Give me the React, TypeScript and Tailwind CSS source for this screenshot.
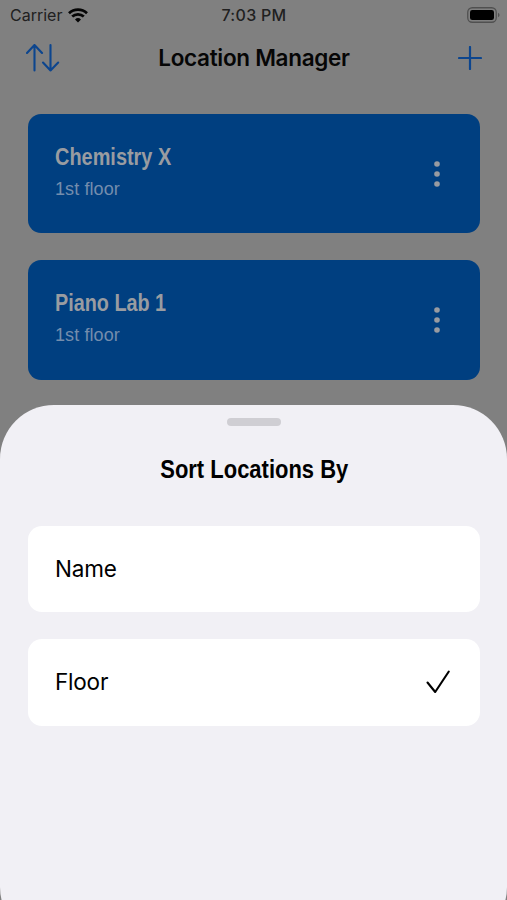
import { useState } from 'react';

const locations = [
  { name: 'Chemistry X', floor: '1st floor', nameClass: 'scale-x-[0.83]' },
  { name: 'Piano Lab 1', floor: '1st floor', nameClass: 'scale-x-[0.825]' },
];

const sortOptions = ['Name', 'Floor'];

function StatusBar() {
  return (
    <div className="grid h-[30px] grid-cols-3 items-center pl-[10px] pr-[7px] text-[#202020]">
      <div className="flex items-center gap-[6px]">
        <span className="text-[16px]">Carrier</span>
        <svg width="20" height="15" viewBox="0 0 20 15" fill="none" stroke="#050505" strokeWidth="2.7">
          <path d="M1 5.2C6 .3 14 .3 19 5.2" />
          <path d="M4.2 8.6C7.5 5.5 12.5 5.5 15.8 8.6" />
          <path d="M7 11.4Q10 8.8 13 11.4L10 14.4Z" fill="#050505" stroke="none" />
        </svg>
      </div>
      <span className="-ml-[2px] text-center text-[16px] font-medium tracking-[0.3px]">7:03 PM</span>
      <svg className="justify-self-end" width="33" height="16" viewBox="0 0 33 16">
        <rect x="0.75" y="0.75" width="28.5" height="14.5" rx="4.5" fill="none" stroke="#505050" strokeWidth="1.3" />
        <rect x="3" y="3" width="24" height="10" rx="2.3" fill="#000" />
        <path d="M31 5.7Q32.6 6.4 32.6 8T31 10.3Z" fill="#505050" />
      </svg>
    </div>
  );
}

function NavBar() {
  return (
    <header className="grid h-[56px] grid-cols-[1fr_auto_1fr] items-center pl-[26px] pr-[25px]">
      <svg width="35" height="30" viewBox="0 0 35 30" fill="none" stroke="#0c458e" strokeWidth="2.1" strokeLinecap="round" strokeLinejoin="round">
        <path d="M8.5 27.5V2M1 10L8.5 2L16 10" />
        <path d="M24.5 2V27.5M17 19.5L24.5 27.5L32.2 19.5" />
      </svg>
      <h1 className="text-[22.5px] font-semibold tracking-[-0.3px] text-[#060606]">Location Manager</h1>
      <svg className="justify-self-end" width="24" height="24" viewBox="0 0 24 24" fill="none" stroke="#0c458e" strokeWidth="2.2" strokeLinecap="round">
        <path d="M12 1V23M1 12H23" />
      </svg>
    </header>
  );
}

export default function App() {
  const [sortBy, setSortBy] = useState('Floor');

  return (
    <div className="relative h-[900px] w-full overflow-hidden bg-[#808080] font-['Inter',sans-serif]">
      <StatusBar />
      <NavBar />

      {/* Locations */}
      <main className="mt-7 flex flex-col gap-[27px] pr-[27px] pl-7">
        {locations.map((location) => (
          <div key={location.name} className="flex h-[119.3px] items-center justify-between rounded-[13px] bg-[#003f80] pl-[27px] pr-[40px] font-['Liberation_Sans',sans-serif]">
            <div className="pb-[2px]">
              <h2 className={`origin-left text-[24px] leading-8 font-bold whitespace-nowrap text-[#999ca1] ${location.nameClass}`}>{location.name}</h2>
              <p className="text-[18px] leading-8 tracking-[0.1px] text-[#748dad]">{location.floor}</p>
            </div>
            <svg width="6" height="26" viewBox="0 0 6 26" fill="#989ba1">
              <circle cx="3" cy="3" r="2.8" />
              <circle cx="3" cy="13" r="2.8" />
              <circle cx="3" cy="23" r="2.8" />
            </svg>
          </div>
        ))}
      </main>

      {/* Bottom sheet */}
      <section className="absolute inset-x-0 top-[405px] flex h-[536px] flex-col items-center rounded-[54px] bg-[#f1f0f5] pt-[13px] pr-[27px] pl-7">
        <div className="h-2 w-[54px] rounded-full bg-[#cfced3]" />
        <h2 className="mt-[27px] scale-x-[0.845] font-['Liberation_Sans',sans-serif] text-[26px] leading-8 font-bold whitespace-nowrap text-black">Sort Locations By</h2>
        <div className="mt-[40.5px] flex w-full flex-col gap-[27px]">
          {sortOptions.map((option) => (
            <button key={option} onClick={() => setSortBy(option)} className="flex h-[86.5px] items-center justify-between rounded-[14px] bg-white pl-[27px] pr-[29px] text-[22.5px] tracking-[-0.2px] text-black">
              {option}
              {sortBy === option && (
                <svg width="26" height="26" viewBox="0 0 26 26" fill="none" stroke="#000" strokeWidth="2.1" strokeLinecap="round" strokeLinejoin="round">
                  <path d="M2.5 13.5L10.2 23L23.8 2.5" />
                </svg>
              )}
            </button>
          ))}
        </div>
      </section>
    </div>
  );
}
